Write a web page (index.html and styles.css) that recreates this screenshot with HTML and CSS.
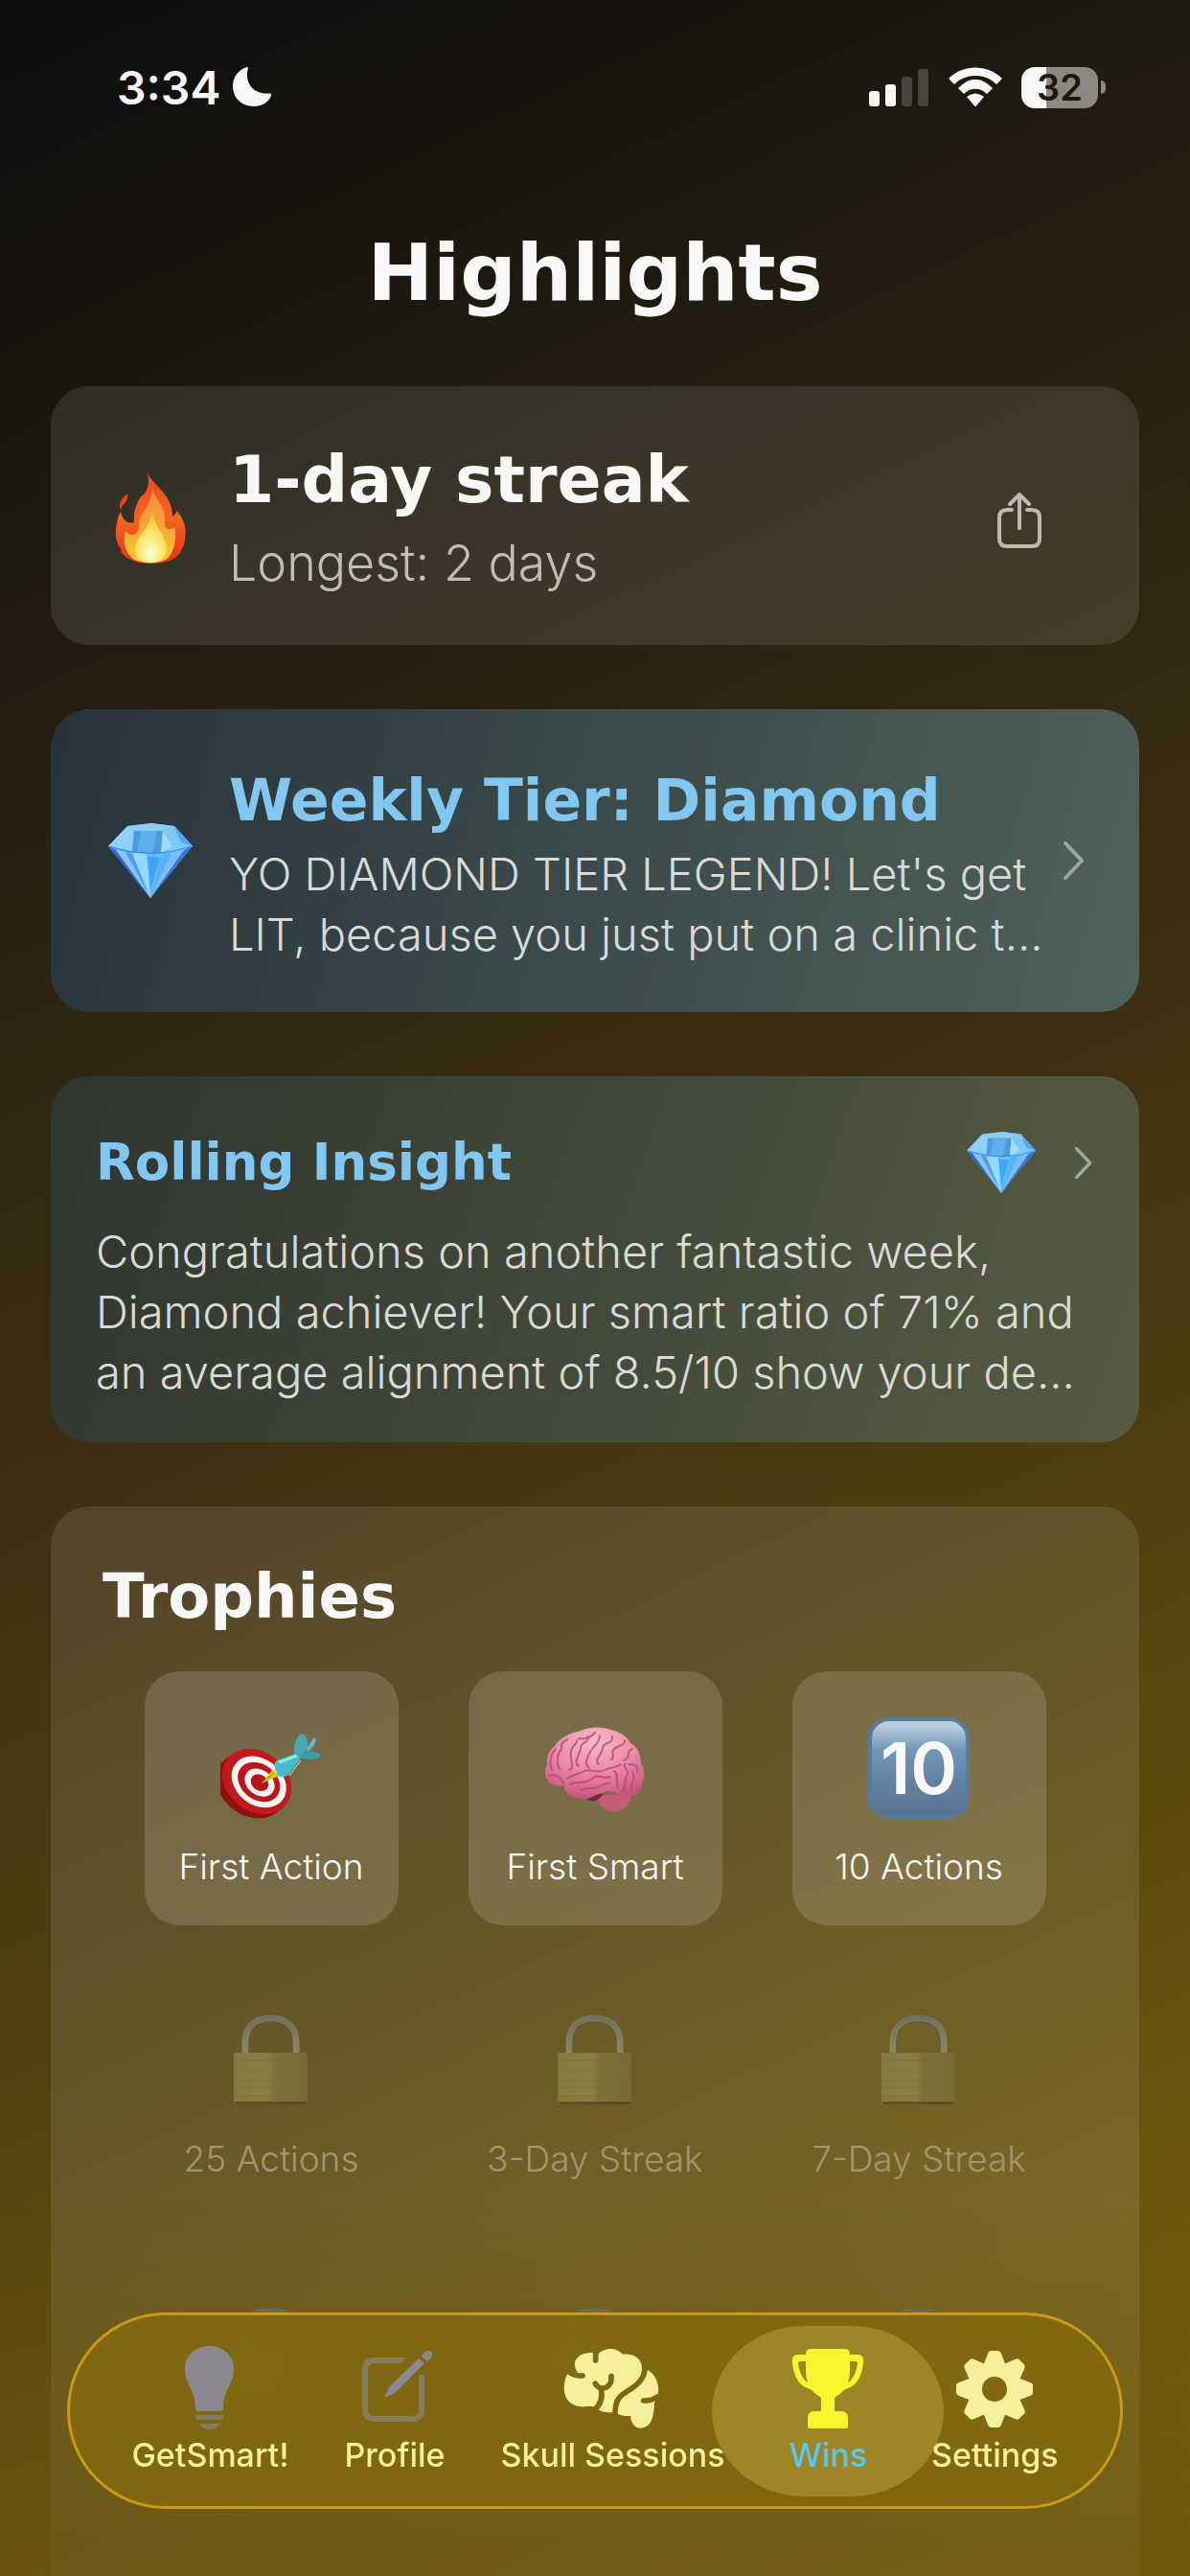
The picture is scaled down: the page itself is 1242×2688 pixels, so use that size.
FILE: index.html
```html
<!DOCTYPE html>
<html lang="en">
<head>
<meta charset="utf-8">
<meta name="viewport" content="width=device-width, initial-scale=1">
<title>Highlights</title>
<link rel="stylesheet" href="styles.css">
</head>
<body>
<svg class="defs" aria-hidden="true">
  <defs>
    <linearGradient id="flame" x1="0" y1="0" x2="0" y2="1"><stop offset="0" stop-color="#ee4a22"/><stop offset=".5" stop-color="#f4641f"/><stop offset="1" stop-color="#e8321a"/></linearGradient>
    <linearGradient id="flameMid" x1="0" y1="0" x2="0" y2="1"><stop offset="0" stop-color="#f28a45"/><stop offset=".5" stop-color="#f9a534"/><stop offset="1" stop-color="#fbc92f"/></linearGradient>
    <radialGradient id="flameCore" cx=".5" cy=".8" r=".7"><stop offset="0" stop-color="#fdfbe6"/><stop offset=".4" stop-color="#fbee7e"/><stop offset="1" stop-color="#f9cf3a"/></radialGradient>
    <linearGradient id="steel" x1="0" y1="0" x2="0" y2="1"><stop offset="0" stop-color="#6f735a"/><stop offset="1" stop-color="#8b8766"/></linearGradient>
    <linearGradient id="brass" x1="0" y1="0" x2="1" y2="0"><stop offset="0" stop-color="#85793e"/><stop offset=".46" stop-color="#8a7d43"/><stop offset=".56" stop-color="#7f713b"/><stop offset="1" stop-color="#786a35"/></linearGradient>
    <radialGradient id="brainFill" cx=".5" cy=".2" r=".8"><stop offset="0" stop-color="#f7b9cb"/><stop offset=".55" stop-color="#ec88a6"/><stop offset="1" stop-color="#c9557e"/></radialGradient>
    <symbol id="gem" viewBox="0 0 88 78">
      <path d="M20 3 45 0 69 3 88 24 44 78 0 24Z" fill="#5cb4f5"/>
      <path d="M20 3 45 0 69 3 57 8 27 8Z" fill="#8fcbf2"/>
      <path d="M20 3 27 8 25 29 0 24Z" fill="#8fd2f6"/>
      <path d="M27 8H57L55 31Q40 33 25 29Z" fill="#4a9be0"/>
      <path d="M34 8H51L46 31 30 30Z" fill="#5fadea"/>
      <path d="M57 8 69 3 88 24 78 29 55 31Z" fill="#7cc8fa"/>
      <path d="M69 3 76 20 88 24Z" fill="#57a5ee"/>
      <path d="M57 8 67 24 55 31Z" fill="#a2dbfb"/>
      <path d="M0 24 8 28 44 78Z" fill="#2e67cf"/>
      <path d="M8 28 25 31 44 78Z" fill="#8cc4f7"/>
      <path d="M18 30 25 31 44 78Z" fill="#4f9cf0"/>
      <path d="M25 31 56 32 44 78Z" fill="#65c0fa"/>
      <path d="M25 31 40 32 44 78Z" fill="#93d8fd"/>
      <path d="M41 34 54 36 44 70Z" fill="#3fa4f5"/>
      <path d="M56 32 79 28 44 78Z" fill="#7fbcf3"/>
      <path d="M56 32 66 31 44 78Z" fill="#55b1f8"/>
      <path d="M79 28 88 24 44 78Z" fill="#2f78dc"/>
      <path d="M0 24Q44 39 88 24" fill="none" stroke="#3884d8" stroke-width="1"/>
    </symbol>
    <symbol id="lock" viewBox="0 0 106 106">
      <path d="M26 46V34C26 16 38 9 52.500 9S79 16 79 34V46" fill="none" stroke="url(#steel)" stroke-width="7"/>
      <path d="M30 46V34C30 20 40 13 52.500 13S75 20 75 34V46" fill="none" stroke="#5f5836" stroke-width="1"/>
      <rect x="14" y="45" width="77" height="54" rx="2" fill="url(#brass)"/>
      <path d="M14 53H91M14 63H91M14 74H91M14 81H91M14 90H91" stroke="#6f622f" stroke-opacity=".35"/>
      <path d="M14 96H91L89 99H16Z" fill="#5c4f22"/>
    </symbol>
    <symbol id="chevron" viewBox="0 0 24 42">
      <path d="M3 3 20 21 3 39" fill="none" stroke="currentColor" stroke-width="4" stroke-linecap="round" stroke-linejoin="round"/>
    </symbol>
  </defs>
</svg>

<div class="screen">
  <div class="status">
    <div class="status-side">
      <span class="clock">3:34</span>
      <svg width="42" height="42" viewBox="0 0 42 42" aria-hidden="true"><path d="M17 1C13 14 20 29 39 27.500C41 27.500 41.500 28.500 41 30C38 37 31 41 23 41C10 41 1 32 1 20C1 11 6 4 14 .6C16 0 17.300 0 17 1Z" fill="#f7f7f7"/></svg>
    </div>
    <div class="status-side indicators">
      <svg width="64" height="42" viewBox="0 0 64 42" aria-hidden="true"><g fill="#f7f7f7"><rect x="1" y="25" width="11" height="16" rx="3"/><rect x="18" y="18" width="11" height="23" rx="3"/></g><g fill="#46443c"><rect x="35" y="10" width="11" height="31" rx="3"/><rect x="52" y="2" width="11" height="39" rx="3"/></g></svg>
      <svg width="56" height="42" viewBox="0 0 56 42" aria-hidden="true"><g fill="#f7f7f7"><path d="M1 13Q0 12 1 11C16-3 40-3 55 11Q56 12 55 13L50 18C38 6 18 6 6 18Z"/><path d="M10 22Q20 12 28 13Q36 12 46 22L40 28C33 21 23 21 16 28Z"/><path d="M19 31Q28 24 37 31L29 40.500Q28 41.500 27 40.500Z"/></g></svg>
      <div class="battery"><span class="battery-body">32</span><span class="battery-tip"></span></div>
    </div>
  </div>

  <main class="content">
    <h1>Highlights</h1>

    <section class="card streak">
      <svg class="lead-icon" viewBox="0 0 88 100" aria-hidden="true">
        <path d="M41 1C47 14 67 22 67 46Q71 43 72 40C79 50 82 58 80 68C80 74 78 80 74 83Q76 82 77 80C73 90 62 95 44 95C26 95 15 88 12 80L15 82C8 75 6 64 9 53Q10 45 13 41C15 50 20 54 27 52C26 42 29 33 34 25Q36 24 37 23C42 17 43 10 41 1Z" fill="url(#flame)"/>
        <path d="M20 22C22 33 12 32 14 40C10 36 11 29 20 22Z" fill="#e8401f"/>
        <path d="M46 17C50 30 60 35 59 50C58 58 62 62 69 57C72 70 68 86 60 91C50 96 36 95 27 91C17 84 15 72 18 61C23 68 32 66 32 56C31 42 45 37 46 17Z" fill="url(#flameMid)"/>
        <path d="M46 42C48 56 60 66 61 78C61 90 53 94 44 94C34 94 27 90 28 78C30 66 42 60 46 42Z" fill="url(#flameCore)"/>
      </svg>
      <div class="card-text">
        <h2 class="title-large">1-day streak</h2>
        <p class="longest">Longest: 2 days</p>
      </div>
      <button class="share" type="button" aria-label="Share streak">
        <svg width="48" height="60" viewBox="0 0 48 60" aria-hidden="true"><path d="M16 19H11Q3 19 3 27V49Q3 57 11 57H37Q45 57 45 49V27Q45 19 37 19H32M24 38V3M14 13 24 3 34 13" fill="none" stroke="currentColor" stroke-width="4" stroke-linecap="round" stroke-linejoin="round"/></svg>
      </button>
    </section>

    <a class="card tier" href="#tier">
      <svg class="lead-icon" viewBox="0 0 88 78" aria-hidden="true"><use href="#gem"/></svg>
      <div class="card-text">
        <h2 class="title-medium">Weekly Tier: Diamond</h2>
        <p class="body-text">YO DIAMOND TIER LEGEND! Let's get<br>LIT, because you just put on a clinic t...</p>
      </div>
      <svg class="chevron" width="24" height="42" aria-hidden="true"><use href="#chevron"/></svg>
    </a>

    <a class="card insight" href="#insight">
      <div class="insight-head">
        <h2 class="title-small">Rolling Insight</h2>
        <svg width="72" height="64" aria-hidden="true"><use href="#gem"/></svg>
        <svg class="chevron" width="20" height="35" aria-hidden="true"><use href="#chevron"/></svg>
      </div>
      <p class="body-text">Congratulations on another fantastic week,<br>Diamond achiever! Your smart ratio of 71% and<br>an average alignment of 8.5/10 show your de...</p>
    </a>

    <section class="card trophies">
      <h2 class="title-section">Trophies</h2>
      <ul class="trophy-grid">
        <li class="trophy won">
          <svg class="emoji" viewBox="0 0 106 106" aria-hidden="true">
            <g transform="rotate(38 36 68)"><ellipse cx="35" cy="73" rx="39" ry="31" fill="#8d1212"/><ellipse cx="37" cy="66" rx="39" ry="31" fill="#c2191d"/><ellipse cx="39" cy="65" rx="31" ry="24" fill="#f6f4f2"/><ellipse cx="39" cy="65" rx="24" ry="18.500" fill="#b9181c"/><ellipse cx="40" cy="65" rx="17" ry="13" fill="#f6f4f2"/><ellipse cx="40" cy="65" rx="10" ry="8" fill="#b2171b"/></g>
            <path d="M43 69 55 54 61 61Z" fill="#eec11c"/>
            <path d="M45 67 56 58" stroke="#a77b0b" stroke-width="1"/>
            <path d="M57 53Q55 46 61 44L81 37 84 43 71 60Q66 64 60 61Z" fill="#45bcc8"/>
            <path d="M61 47 80 40" stroke="#8ee8ee" stroke-width="3"/>
            <path d="M72 61 84 45" stroke="#d4e4e2" stroke-width="1"/>
            <path d="M77 38C76 27 80 18 86 17C91 20 92 28 90 34L84 42Z" fill="#43a9b5"/>
            <path d="M90 32 98 21Q101 23 98 29L91 37Z" fill="#66b7bc"/>
            <path d="M82 42C89 34 98 34 105 39C105 43 96 45 86 43Z" fill="#3b9caa"/>
          </svg>
          <span>First Action</span>
        </li>
        <li class="trophy won">
          <svg class="emoji" viewBox="0 0 106 106" aria-hidden="true">
            <path d="M57 81C55 90 62 98 74 98C84 97 90 92 91 80Z" fill="#c65d75"/>
            <path d="M44 85Q50 90 57 85L62 80 48 80Z" fill="#6b2d40"/>
            <path d="M6 69C0 62 0 54 3 50C2 42 5 34 11 30C16 21 28 16 38 14C48 9 62 10 70 13C80 15 87 21 90 27C98 31 101 40 101 48C106 54 105 64 102 69C101 78 95 83 86 82C77 82 72 76 65 77C59 79 53 81 48 84C39 86 28 85 23 78Q20 76 21 71C15 72 9 72 6 69Z" fill="url(#brainFill)"/>
            <path d="M8 55C4 46 8 37 12 33M16 54C12 46 14 37 18 33Q16 27 24 23M26 55C33 54 26 43 28 35S35 29 34 24M36 51C29 46 38 39 38 32S48 27 45 20M47 53C41 49 45 40 50 33S56 29 58 19M57 49C51 44 61 39 61 32S72 29 71 20M24 64C32 58 38 59 42 56S56 59 63 55S73 54 80 49M27 70C34 66 44 70 50 64S60 65 69 62M38 76Q44 73 50 74C57 75 60 68 68 69M73 56C78 58 74 66 77 73M80 78C87 74 82 68 86 61S82 54 84 49M92 75C88 68 97 64 92 57M88 49Q99 48 97 57M70 44C76 41 66 36 76 31S83 29 84 24M83 45C92 41 84 36 92 33M5 61C12 58 18 64 20 69M36 22Q46 24 53 16" fill="none" stroke="#b34a72" stroke-opacity=".8" stroke-width="2" stroke-linecap="round"/>
          </svg>
          <span>First Smart</span>
        </li>
        <li class="trophy won">
          <b class="emoji keycap">10</b>
          <span>10 Actions</span>
        </li>
        <li class="trophy"><svg class="emoji" aria-hidden="true"><use href="#lock"/></svg><span>25 Actions</span></li>
        <li class="trophy"><svg class="emoji" aria-hidden="true"><use href="#lock"/></svg><span>3-Day Streak</span></li>
        <li class="trophy"><svg class="emoji" aria-hidden="true"><use href="#lock"/></svg><span>7-Day Streak</span></li>
        <li class="trophy"><svg class="emoji" aria-hidden="true"><use href="#lock"/></svg></li>
        <li class="trophy"><svg class="emoji" aria-hidden="true"><use href="#lock"/></svg></li>
        <li class="trophy"><svg class="emoji" aria-hidden="true"><use href="#lock"/></svg></li>
      </ul>
    </section>
  </main>

  <div class="dock">
    <nav class="tabs" aria-label="Main">
      <a class="tab" href="#getsmart">
        <svg width="56" height="88" viewBox="0 0 56 88" aria-hidden="true"><path d="M27.500 1C13 1 2 11 2 25C2 42 13 46 13 66Q13 69 16 69H39Q42 69 42 66C42 46 53 42 53 25C53 11 42 1 27.500 1Z" fill="#8b898f"/><rect x="13" y="73" width="29" height="5" rx="2" fill="#877c5a"/><path d="M17 82H38Q36 88 27.500 88T17 82Z" fill="#877c5a"/></svg>
        <span>GetSmart!</span>
      </a>
      <a class="tab" href="#profile">
        <svg width="80" height="88" viewBox="-2 0 80 88" aria-hidden="true"><path d="M52 16H17Q7 16 7 26V67Q7 77 17 77H56Q66 77 66 67V31" fill="none" stroke="#877c5a" stroke-width="6"/><path d="M67 6 30 53" stroke="#7f6715" stroke-width="18"/><path d="M29 54Q27 55 28 53L32 44 63 14 69 19 37 51Z" fill="#8b898f"/><path d="M66 12 69 8Q72 4 76 7Q79 10 76 13L72 17Z" fill="#8b898f"/></svg>
        <span>Profile</span>
      </a>
      <a class="tab" href="#sessions">
        <svg width="100" height="88" viewBox="48 51 300 264" aria-hidden="true" overflow="visible">
          <mask id="folds" maskUnits="userSpaceOnUse" x="30" y="40" width="320" height="290"><rect x="30" y="40" width="320" height="290" fill="#fff"/><g fill="none" stroke="#000" stroke-width="17" stroke-linecap="round"><path d="M297 118C300 158 268 180 240 197C212 213 203 230 204 275"/><path d="M143 60V99"/><path d="M52 124C65 146 84 148 102 147"/><path d="M142 172C150 186 165 189 177 183C191 175 192 165 192 149"/><path d="M160 190C166 215 160 236 138 256"/><path d="M293 225C308 226 322 223 336 213"/></g></mask>
          <path mask="url(#folds)" d="M62 135C45 150 42 180 46 202C52 232 78 246 108 244C128 243 138 242 145 250C158 260 175 263 195 262C204 258 212 268 222 271C234 275 244 272 252 273C254 295 265 312 286 311C317 308 325 280 327 232C340 212 342 190 337 172C332 150 320 136 305 129L288 125C288 95 265 77 228 80C215 65 195 60 180 64C165 67 157 72 150 82L137 76C110 72 85 82 78 105C76 117 80 130 88 138Z" fill="#f6ef9b"/>
        </svg>
        <span>Skull Sessions</span>
      </a>
      <a class="tab current" href="#wins" aria-current="page">
        <svg width="76" height="88" viewBox="0 0 76 88" aria-hidden="true"><path d="M20 4H56Q61 4 61 10H69Q76 10 75 18C74 33 67 44 56 46Q50 52 45 55V69H52Q59 69 59 76V85Q59 87 57 87H19Q17 87 17 85V76Q17 69 24 69H31V55Q26 52 20 46C9 44 2 33 1 18Q0 10 7 10H15Q15 4 20 4ZM15 17H9Q7 17 7 19C8 28 12 36 17 39Q15 34 15 27ZM61 17V27Q61 34 59 39C64 36 68 28 69 19Q69 17 67 17Z" fill="#f7f72f" fill-rule="evenodd"/></svg>
        <span>Wins</span>
      </a>
      <a class="tab" href="#settings">
        <svg width="84" height="88" viewBox="-42 -46 84 88" aria-hidden="true"><defs><path id="tooth" d="M-12-24-7-37Q-6-40-4-40H4Q6-40 7-37L12-24Z"/></defs><g fill="#f6ef9b"><circle r="20.500" fill="none" stroke="#f6ef9b" stroke-width="15"/><use href="#tooth"/><use href="#tooth" transform="rotate(45)"/><use href="#tooth" transform="rotate(90)"/><use href="#tooth" transform="rotate(135)"/><use href="#tooth" transform="rotate(180)"/><use href="#tooth" transform="rotate(225)"/><use href="#tooth" transform="rotate(270)"/><use href="#tooth" transform="rotate(315)"/></g></svg>
        <span>Settings</span>
      </a>
    </nav>
  </div>
</div>
</body>
</html>
```
FILE: styles.css
```css
* { box-sizing: border-box; }

body {
  margin: 0;
  color: #f7f7f7;
  font-family: Inter, "Liberation Sans", sans-serif;
  font-weight: 300;
}

h1, h2, p, ul { margin: 0; padding: 0; }
a { color: inherit; text-decoration: none; }
svg { display: block; flex: none; }
.defs { position: absolute; width: 0; height: 0; }

.screen {
  height: 100vh;
  display: flex;
  flex-direction: column;
  overflow: hidden;
  background: linear-gradient(155deg, #0d0d0f 0%, #3c2f12 48%, #7a640a 100%);
}

/* Status bar */
.status {
  flex: none;
  display: flex;
  justify-content: space-between;
  align-items: center;
  height: 182px;
  padding: 0 88px 0 122px;
}
.status-side { display: flex; align-items: center; gap: 12px; }
.indicators { gap: 20px; }
.clock { font-size: 48px; font-weight: 600; }
.battery { display: flex; align-items: center; gap: 3px; }
.battery-body {
  width: 80px;
  height: 43px;
  border-radius: 14px;
  background: linear-gradient(90deg, #f7f7f7 32%, #8b8982 32%);
  color: #1c1a10;
  font-size: 38px;
  font-weight: 600;
  line-height: 43px;
  text-align: center;
}
.battery-tip { width: 5px; height: 14px; border-radius: 0 6px 6px 0; background: #8b8982; }

/* Content */
.content {
  flex: 1;
  min-height: 0;
  display: flex;
  flex-direction: column;
  gap: 67px;
  padding: 42px 53px 0;
}
h1, h2 { font-family: "DejaVu Sans", sans-serif; font-weight: 700; }
h1 { padding-top: 10px; font-size: 82px; line-height: 102px; text-align: center; }
h2 { line-height: 90px; white-space: nowrap; }
.title-large { font-size: 68px; }
.title-section { font-size: 64px; }
.title-medium { font-size: 60px; }
.title-small { font-size: 53px; }

.card {
  flex: none;
  border-radius: 40px;
  background: rgba(255, 255, 255, .1);
}
.streak, .tier { display: flex; align-items: center; gap: 38px; }
.streak { padding: 53px 101px 43px 60px; }
.tier { padding: 50px 56px 50px 60px; background: linear-gradient(105deg, #27333b, #50625a); }
.insight { padding: 45px 48px 42px 47px; background: linear-gradient(109deg, #2f3530, #565c42); }
.lead-icon { width: 88px; }
.card-text { flex: 1; min-width: 0; }
.longest { color: #bfbdb8; font-size: 52px; line-height: 84px; }
.body-text { color: #d9dad8; font-size: 47px; line-height: 63px; white-space: nowrap; }
.tier h2, .insight h2 { color: #82c7f2; }
.chevron { color: #a0a69f; }
.share { padding: 0; border: 0; background: none; color: #bdbab2; }

.insight-head { display: flex; align-items: center; gap: 40px; margin-bottom: 16px; }
.insight-head h2 { flex: 1; }

/* Trophies */
.trophies { flex: 1; min-height: 0; padding: 49px 54px 0; border-radius: 40px 40px 0 0; overflow: hidden; }
.trophy-grid {
  display: grid;
  grid-template-columns: repeat(3, 265px);
  justify-content: center;
  gap: 40px 73px;
  margin-top: 33px;
  list-style: none;
}
.trophy {
  display: flex;
  flex-direction: column;
  align-items: center;
  gap: 28px;
  height: 265px;
  padding-top: 48px;
  border-radius: 36px;
  color: #a3966f;
  font-size: 37px;
  line-height: 44px;
  white-space: nowrap;
}
.won { background: rgba(255, 255, 255, .15); color: #f7f7f7; }
.emoji { width: 106px; height: 106px; }
.keycap {
  border-radius: 22px;
  background: linear-gradient(#b9cedd 5%, #7396b8 30%, #6484a3 60%, #57738f);
  border: 4px solid #587a9b;
  font-size: 74px;
  font-weight: 600;
  line-height: 98px;
  text-align: center;
}

/* Tab bar */
.dock {
  position: fixed;
  inset: auto 0 0;
  padding: 113px 70px 70px;
  background: linear-gradient(rgba(104, 84, 14, 0), rgba(104, 84, 14, .65) 90%);
}
.tabs {
  position: relative;
  isolation: isolate;
  display: flex;
  justify-content: center;
  gap: 58px;
  height: 205px;
  padding-top: 31px;
  border: 3px solid #cc9818;
  border-radius: 103px;
  background: rgba(130, 104, 15, .88);
  backdrop-filter: blur(5px);
}
.tab {
  position: relative;
  display: flex;
  flex-direction: column;
  align-items: center;
  gap: 7px;
  color: #f8f09d;
  font-size: 34px;
  font-weight: 500;
  line-height: 40px;
  white-space: nowrap;
}
.tab svg { margin: 0 -20px; }
.current { padding: 0 9px; color: #57c8f5; z-index: -1; }
.current::before {
  content: "";
  position: absolute;
  z-index: -1;
  top: -20px;
  left: 50%;
  width: 242px;
  height: 178px;
  margin-left: -121px;
  border-radius: 96px / 89px;
  background: #a08526;
}
```
